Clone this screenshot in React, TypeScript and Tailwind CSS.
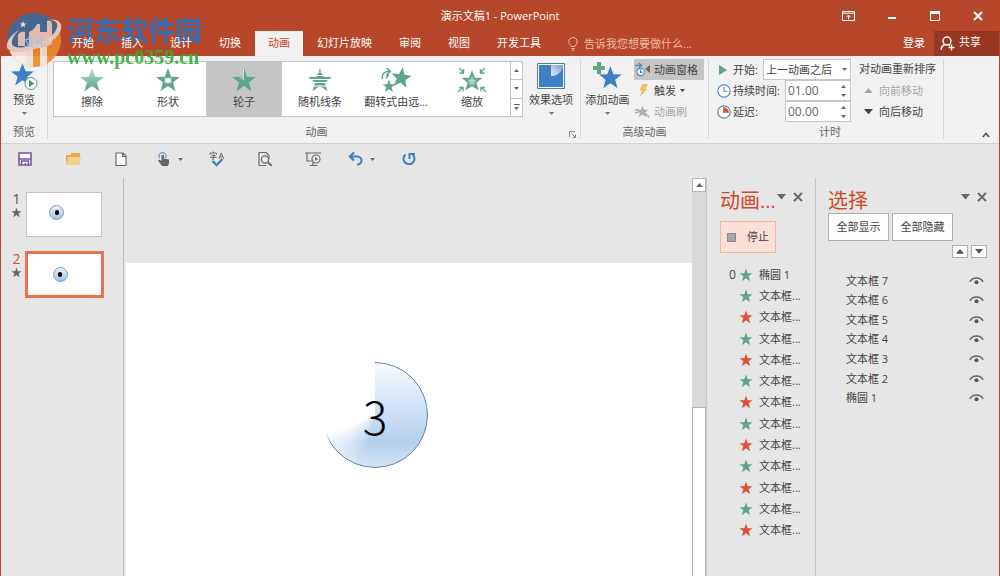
import { useState } from 'react';
import type { ReactNode } from 'react';

const STAR = '12,1 14.9,9 23,9.2 16.6,14.3 19,22.5 12,17.6 5,22.5 7.4,14.3 1,9.2 9.1,9';
const GREEN = '#5fa58b';
const BLUE = '#3f7fc4';

const tabs = ['文件', '开始', '插入', '设计', '切换', '动画', '幻灯片放映', '审阅', '视图', '开发工具'];
const shapes = ['文本框 7', '文本框 6', '文本框 5', '文本框 4', '文本框 3', '文本框 2', '椭圆 1'];
const effects = ['椭圆 1', ...Array.from({ length: 12 }, () => '文本框...')];

function Star({ color, className }: { color: string; className: string }) {
  return (
    <svg viewBox="0 0 24 24" className={className} aria-hidden="true">
      <polygon points={STAR} fill={color} />
    </svg>
  );
}

function Caret({ up = false, className = 'w-[5px]' }: { up?: boolean; className?: string }) {
  return (
    <svg viewBox="0 0 10 6" className={`${className} shrink-0`} aria-hidden="true">
      <path d={up ? 'M0 6 5 0l5 6z' : 'M0 0h10L5 6z'} fill="currentColor" />
    </svg>
  );
}

function Clock({ red = false }: { red?: boolean }) {
  return (
    <svg viewBox="0 0 14 14" className="w-[14px] shrink-0" aria-hidden="true">
      <circle cx="7" cy="7" r="6.2" fill="#fff" stroke="#5b88b8" strokeWidth="1.2" />
      {red ? (
        <path d="M6.500 7.500V2.500a5 5 0 0 1 5 5z" fill="#e0573a" stroke="#b04a30" strokeWidth=".6" />
      ) : (
        <path d="M7 3v4.3h3.5" fill="none" stroke="#5b88b8" strokeWidth="1.1" />
      )}
    </svg>
  );
}

function Group({ label, className = '', children }: { label?: string; className?: string; children?: ReactNode }) {
  return (
    <section className={`relative flex shrink-0 flex-col justify-between ${className}`}>
      <div className="flex pt-[3px]">{children}</div>
      <h2 className="pb-[3px] text-center leading-4 text-[#666]">{label}</h2>
    </section>
  );
}

function Divider() {
  return <div className="my-1 w-px shrink-0 bg-[#d5d5d5]" />;
}

function Logo() {
  return (
    <svg viewBox="0 0 56 56" className="mt-3 size-14" aria-hidden="true">
      <defs>
        <clipPath id="disc"><circle cx="28" cy="28" r="27" /></clipPath>
      </defs>
      <g clipPath="url(#disc)">
        <path d="M0 0h56v22L34 36 0 40z" fill="#3a6c9c" />
        <path d="M56 14v42H0V41c18 0 46-6 53-20z" fill="#ee8a2a" />
        <path d="M2 39h18v17H2z" fill="#f6ede6" />
        <path d="M20 36h7v20h-7zM34 32h7v24h-7z" fill="#f3e3da" />
      </g>
      <path d="M12 23c1-3 4-4 7-3v14h-7z" fill="#e6c6bd" />
      <path d="M23 20c4-2 6-4 8-8h3v24H23z" fill="#e6c6bd" />
      <path d="M34 20h7V9c4-1 5 0 5 4v19l-5 3h-7z" fill="#e6c6bd" />
      <path
        d="M13 18C6 22 0 29 1 35c1 7 17 6 31 1 14-5 25-14 23-23-1-5-6-6-12-5 7 0 9 3 8 7-1 7-11 14-21 17-11 4-23 5-24 0-1-4 2-9 7-14z"
        fill="#ead3cc"
      />
      <path d="m17 9 1 2.500h2.500l-2 1.500.8 2.500-2.300-1.500-2.300 1.500.8-2.500-2-1.500H16z" fill="#e9edf2" />
    </svg>
  );
}

function Watermark() {
  return (
    <div className="pointer-events-none absolute left-[5px] top-0 z-10 flex gap-[5px] opacity-90">
      <Logo />
      <div className="pt-[14px]">
        <p className="font-['Noto_Sans_CJK_SC',sans-serif] text-[27px] font-bold leading-8 text-[#2673c4]">河东软件园</p>
        <p className="font-['Liberation_Serif',serif] text-[20px] font-bold leading-[22px] text-[#35ad3b]">www.pc0359.cn</p>
      </div>
    </div>
  );
}

function TitleBar() {
  return (
    <header className="grid h-[31px] grid-cols-[1fr_auto_1fr] items-center">
      <span />
      <h1>演示文稿1 - PowerPoint</h1>
      <div className="flex justify-end">
        <button aria-label="功能区显示选项" className="flex w-[43px] justify-center">
          <svg viewBox="0 0 13 10" className="w-[13px]" fill="none" stroke="currentColor">
            <path d="M.5.5h12v9H.5zM.5 2.2h12M6.5 8.5v-4M4.5 6l2-2 2 2" />
          </svg>
        </button>
        <button aria-label="最小化" className="flex w-[43px] justify-center">
          <svg viewBox="0 0 10 10" className="w-[10px]"><path d="M1 6h8v2H1z" fill="currentColor" /></svg>
        </button>
        <button aria-label="最大化" className="flex w-[43px] justify-center">
          <svg viewBox="0 0 10 10" className="w-[10px]"><path d="M.5.5h9v9h-9z" fill="none" stroke="currentColor" /><path d="M0 0h10v3H0z" fill="currentColor" /></svg>
        </button>
        <button aria-label="关闭" className="flex w-[43px] justify-center">
          <svg viewBox="0 0 10 10" className="w-[10px]"><path d="m1 1 8 8M9 1 1 9" stroke="currentColor" strokeWidth="2" /></svg>
        </button>
      </div>
    </header>
  );
}

function TabBar({ active, onSelect }: { active: string; onSelect: (tab: string) => void }) {
  return (
    <nav className="relative z-20 flex h-[25px] items-stretch pl-[9px]">
      <div className="flex gap-px">
        {tabs.map((tab) => (
          <button
            key={tab}
            onClick={() => onSelect(tab)}
            className={`px-[13px] pb-[2px] ${tab === active ? 'bg-[#f1f1f1] text-[#c8452a]' : ''} ${tab === '文件' ? 'text-[#9cc8ee]' : ''}`}
          >
            {tab}
          </button>
        ))}
      </div>
      <label className="flex flex-1 items-center gap-[6px] pl-[14px] text-[#f0b9a9]">
        <svg viewBox="0 0 10 14" className="w-[10px] shrink-0" fill="none" stroke="currentColor" aria-hidden="true">
          <path d="M3 9.5C3 8 .8 7.300.8 4.700a4.200 4.200 0 0 1 8.400 0C9.200 7.300 7 8 7 9.500zM3.200 11.500h3.600M3.700 13.300h2.600" />
        </svg>
        <input
          aria-label="操作说明搜索"
          placeholder="告诉我您想要做什么..."
          className="w-full bg-transparent outline-none placeholder:text-[#f0b9a9]"
        />
      </label>
      <button className="px-[9px] pb-[2px]">登录</button>
      <button className="flex items-center gap-1 bg-[#963821] pl-[6px] pr-[18px]">
        <svg viewBox="0 0 15 15" className="w-[15px]" fill="none" stroke="currentColor" strokeWidth="1.4" aria-hidden="true">
          <circle cx="7" cy="5" r="4" />
          <path d="M1 14c.3-3 2-5 4.500-5.500M8.500 8.800l1.500.7M11.500 8.500v6M8.500 11.500h6" />
        </svg>
        <span className="pb-[3px]">共享</span>
      </button>
    </nav>
  );
}

function GalleryIcon({ name }: { name: string }) {
  return (
    <svg viewBox="0 0 30 26" className="h-[26px] w-[30px]" aria-hidden="true">
      <defs>
        <linearGradient id="wipe" x1="0" y1="0" x2="0" y2="1">
          <stop offset="0" stopColor="#b8dccd" />
          <stop offset="1" stopColor="#5a9f86" />
        </linearGradient>
        <linearGradient id="wheel" x1="1" y1="0" x2="0" y2="1">
          <stop offset="0" stopColor="#eef7f3" />
          <stop offset="1" stopColor={GREEN} />
        </linearGradient>
      </defs>
      {name === '翻转式由远...' ? (
        <g fill={GREEN}>
          <polygon points={STAR} transform="translate(9 -1) rotate(8 12 12) scale(.94)" />
          <polygon points={STAR} transform="translate(1 12) scale(.58)" />
          <path d="M1.500 12C.5 6.500 4 4 8.500 4.500M5.500 1l4 3.500-4 3.500M5.500 11.500c0-2 1-3 2.500-3.500" fill="none" stroke={GREEN} strokeWidth="1.500" />
        </g>
      ) : name === '缩放' ? (
        <g>
          <polygon points={STAR} transform="translate(3.500 2) scale(.96)" fill={GREEN} />
          <polygon points={STAR} transform="translate(9.500 8.500) scale(.46)" fill="#b3d6c8" />
          <path d="m2 1 4.500 4.500M6.500 2v4h-4M28 1l-4.500 4.500M23.500 2v4h4M1 25l4.500-4.500M2 20.500h4v4M29 25l-4.500-4.500M28 20.500h-4v4" fill="none" stroke={GREEN} strokeWidth="1.400" />
        </g>
      ) : (
        <g>
          <polygon points={STAR} transform="translate(2 0) scale(1.080)" fill={name === '擦除' ? 'url(#wipe)' : GREEN} />
          {name === '形状' && <rect x="12" y="11" width="6" height="5" fill="#fff" stroke="#9ccab8" />}
          {name === '轮子' && <path d="M15 1v13L9 9.700h2.800z" fill="url(#wheel)" />}
          {name === '随机线条' && <path d="M2 5h26M2 8.500h26M2 12.500h26M2 15.500h26M2 19h26" stroke="#fff" strokeWidth="1.200" />}
        </g>
      )}
    </svg>
  );
}

function Gallery() {
  const [selected, setSelected] = useState('轮子');
  return (
    <div className="mt-[2px] flex h-[56px] border border-[#c3c3c3] bg-white">
      {['擦除', '形状', '轮子', '随机线条', '翻转式由远...', '缩放'].map((name) => (
        <button
          key={name}
          onClick={() => setSelected(name)}
          className={`flex w-[76px] flex-col items-center pt-[5px] ${selected === name ? 'bg-[#c5c5c5]' : ''}`}
        >
          <GalleryIcon name={name} />
          <span className="pt-px leading-4">{name}</span>
        </button>
      ))}
      <div className="flex w-3 flex-col divide-y divide-[#c3c3c3] border-l border-[#c3c3c3] text-[#666]">
        <button aria-label="上一行" className="flex flex-1 items-center justify-center"><Caret up /></button>
        <button aria-label="下一行" className="flex flex-1 items-center justify-center"><Caret /></button>
        <button aria-label="其他" className="flex flex-1 flex-col items-center justify-center gap-[2px]">
          <span className="h-px w-[6px] bg-[#666]" />
          <Caret />
        </button>
      </div>
    </div>
  );
}

function BigButton({ label, className, children }: { label: string; className: string; children: ReactNode }) {
  return (
    <button className={`flex flex-col items-center pt-[3px] text-[#777] ${className}`}>
      {children}
      <span className="whitespace-nowrap pt-[2px] leading-4 text-[#444]">{label}</span>
      <Caret className="mt-1 w-[5px]" />
    </button>
  );
}

function Spinner({ id, value, onChange }: { id: string; value: string; onChange: (v: string) => void }) {
  return (
    <div className="flex h-[21px] w-[66px] border border-[#c6c6c6] bg-white">
      <input
        id={id}
        value={value}
        onChange={(e) => onChange(e.target.value)}
        className="w-full min-w-0 pl-[2px] text-[12px] text-[#666] outline-none"
      />
      <div className="flex w-[14px] shrink-0 flex-col items-center justify-center gap-[6px] text-[#666]">
        <Caret up />
        <Caret />
      </div>
    </div>
  );
}

function Ribbon() {
  const [duration, setDuration] = useState('01.00');
  const [delay, setDelay] = useState('00.00');
  return (
    <div className="flex h-[88px] border-b border-[#d2d2d2] bg-[#f1f1f1] text-[#444]">
      <Group label="预览" className="w-[46px]">
        <BigButton label="预览" className="w-full">
          <svg viewBox="0 0 30 28" className="w-[30px]" aria-hidden="true">
            <polygon points={STAR} transform="translate(1 0) scale(1.040)" fill={BLUE} />
            <circle cx="22" cy="21.500" r="6" fill="#fff" stroke="#6b8f80" />
            <path d="m20 18 5.500 3.500L20 25z" fill="#3f9a74" />
          </svg>
        </BigButton>
      </Group>
      <Divider />
      <Group label="动画" className="w-[532px] pl-[5px]">
        <Gallery />
        <BigButton label="效果选项" className="w-[56px]">
          <svg viewBox="0 0 30 28" className="w-[30px]" aria-hidden="true">
            <defs>
              <linearGradient id="corner" x1="0" y1="1" x2="1" y2="0">
                <stop offset="0" stopColor="#e8f1fa" />
                <stop offset="1" stopColor="#6ea0d6" />
              </linearGradient>
            </defs>
            <path d="M1.500 1.500h27v25h-27z" fill="#fff" stroke="#55799f" />
            <path d="M3 3h24v22H3z" fill={BLUE} />
            <path d="M15 3h12c0 6-5 11-12 11z" fill="url(#corner)" />
          </svg>
        </BigButton>
        <button aria-label="动画设置" className="absolute bottom-[5px] right-1">
          <svg viewBox="0 0 8 8" className="w-[7px]" fill="none" stroke="#777" aria-hidden="true">
            <path d="M.5 7V.5H7M3 3l4 4M7.500 4v3.500H4" />
          </svg>
        </button>
      </Group>
      <Divider />
      <Group label="高级动画" className="w-[127px]">
        <BigButton label="添加动画" className="w-[53px]">
          <svg viewBox="0 0 30 28" className="w-[30px]" aria-hidden="true">
            <polygon points={STAR} transform="translate(5 3) scale(1.030)" fill={BLUE} />
            <path d="M4 0h4v4h4v4H8v4H4V8H0V4h4z" fill={GREEN} />
          </svg>
        </BigButton>
        <div className="flex flex-col">
          <button className="flex h-[21px] items-center gap-1 bg-[#c5c5c5] pl-px pr-[6px]">
            <svg viewBox="0 0 16 16" className="w-[15px] shrink-0" fill="none" aria-hidden="true">
              <circle cx="6" cy="10.500" r="4" fill="#fff" stroke="#4e83bb" strokeWidth="1.200" />
              <path d="M6 8v3h2M0 3.500h6M4 1l3 2.500L4 6" stroke="#4e83bb" strokeWidth="1.300" />
              <path d="M16 3v9l-5-4.500z" fill="#666" />
            </svg>
            动画窗格
          </button>
          <button className="flex h-[21px] items-center gap-1 pl-px">
            <svg viewBox="0 0 16 16" className="w-[15px] shrink-0" aria-hidden="true">
              <path d="M8 1h6l-3.500 5H13L5 15l2.500-7H5z" fill="#f2bf55" />
            </svg>
            触发
            <Caret />
          </button>
          <button disabled className="flex h-[21px] items-center gap-1 pl-px text-[#a6a6a6]">
            <svg viewBox="0 0 16 16" className="w-[15px] shrink-0" aria-hidden="true">
              <polygon points={STAR} transform="translate(1 1) scale(.58)" fill="#b0b0b0" />
              <path d="M0 6h4M0 9h4M10 9l5 5" stroke="#b0b0b0" strokeWidth="1.600" />
            </svg>
            动画刷
          </button>
        </div>
      </Group>
      <Divider />
      <Group label="计时" className="w-[234px] pl-2">
        <div className="flex w-[134px] flex-col">
          <div className="flex h-[21px] items-center justify-between">
            <label htmlFor="start" className="flex items-center gap-[6px] pl-[2px]">
              <svg viewBox="0 0 8 10" className="w-[8px]" aria-hidden="true"><path d="m0 0 8 5-8 5z" fill={GREEN} /></svg>
              开始:
            </label>
            <div className="relative">
              <select id="start" className="h-[21px] w-[88px] appearance-none border border-[#c6c6c6] bg-white pl-[2px] leading-4 outline-none">
                <option>上一动画之后</option>
                <option>单击时</option>
                <option>与上一动画同时</option>
              </select>
              <span className="pointer-events-none absolute right-1 top-[9px] flex text-[#666]"><Caret /></span>
            </div>
          </div>
          <div className="flex h-[21px] items-center justify-between">
            <label htmlFor="duration" className="flex items-center gap-[2px] whitespace-nowrap"><Clock />持续时间:</label>
            <Spinner id="duration" value={duration} onChange={setDuration} />
          </div>
          <div className="flex h-[21px] items-center justify-between">
            <label htmlFor="delay" className="flex items-center gap-[2px]"><Clock red />延迟:</label>
            <Spinner id="delay" value={delay} onChange={setDelay} />
          </div>
        </div>
        <div className="flex flex-col pl-2">
          <span className="h-[21px] leading-[20px]">对动画重新排序</span>
          <button disabled className="flex h-[21px] items-center gap-[6px] pl-[5px] text-[#a6a6a6]">
            <Caret up className="w-[9px]" />向前移动
          </button>
          <button className="flex h-[21px] items-center gap-[6px] pl-[5px]">
            <Caret className="w-[9px]" />向后移动
          </button>
        </div>
      </Group>
      <Divider />
      <div className="flex flex-1 items-end justify-end pb-[5px] pr-[9px]">
        <button aria-label="折叠功能区">
          <svg viewBox="0 0 8 6" className="w-[8px]"><path d="m.8 5 3.200-3.500L7.200 5" fill="none" stroke="#555" strokeWidth="1.600" /></svg>
        </button>
      </div>
    </div>
  );
}

function ToolButton({ label, menu = false, children }: { label: string; menu?: boolean; children: ReactNode }) {
  return (
    <button aria-label={label} className="flex w-12 items-center justify-center gap-[6px] text-[#666]">
      <svg viewBox="0 0 16 16" className="w-4 shrink-0" fill="none" stroke="#6a6a6a" strokeWidth="1.200">
        {children}
      </svg>
      {menu && <Caret />}
    </button>
  );
}

function QuickAccess() {
  return (
    <div className="flex h-[34px] items-start pt-[7px]">
      <ToolButton label="保存">
        <path d="M2 2h12v12H2z" fill="#fff" stroke="#7a4fa3" strokeWidth="1.500" />
        <path d="M2 8h12M4.500 14v-4h7v4M8.500 12v2" stroke="#7a4fa3" strokeWidth="1.500" />
      </ToolButton>
      <ToolButton label="打开">
        <path d="M1 4h5V2h9v11H1z" fill="#e3a84c" stroke="none" />
        <path d="M3 6h13l-2 8H1z" fill="#f6cf8b" stroke="none" />
      </ToolButton>
      <ToolButton label="新建">
        <path d="M3 2h7l3 3v9.500H3zM9.500 2v3.500H13" fill="#fff" />
      </ToolButton>
      <ToolButton label="触摸/鼠标模式" menu>
        <path d="M3.500 7a3.500 3.500 0 1 1 6 0" stroke="#74a4d6" strokeWidth="1.500" />
        <path d="M5.500 4v6L3 8.500 2 9.500 6 15h6l1-3V8.500l-5-1V4z" fill="#666" stroke="none" />
      </ToolButton>
      <ToolButton label="拼写检查">
        <path d="M1 3.500V2h6.500v1.500M4.200.5V2M2.300 4.300h4L4.300 5.800v2.500H3M.8 6.300h7M10 7.800l2.300-6 2.300 6M10.800 5.800h3" strokeWidth="1" />
        <path d="m3.500 10 4 4 6-6" stroke={BLUE} strokeWidth="2.300" />
      </ToolButton>
      <ToolButton label="打印预览">
        <path d="M2 14.500V1.500h7l3 3V8M2 14.500h7" />
        <circle cx="8" cy="8.500" r="3.600" fill="#eee" />
        <path d="m10.700 11.200 4 3.500" strokeWidth="2" />
      </ToolButton>
      <ToolButton label="从头开始">
        <path d="M0 2h16M2 2v8h5M4.500 14.500h8M8 11v3" />
        <circle cx="11" cy="8" r="4" fill="#eee" />
        <path d="m10 6 3 2-3 2z" fill="#666" stroke="none" />
      </ToolButton>
      <ToolButton label="撤消" menu>
        <path d="M6 1.500 2 5.500l4 4M2.500 5.500H9c6 0 6 8 0 8" stroke={BLUE} strokeWidth="2.200" />
      </ToolButton>
      <ToolButton label="恢复">
        <path d="M4.500 3.500a5.500 5.500 0 1 0 7 0M8.500 8V3H14" stroke={BLUE} strokeWidth="2" />
      </ToolButton>
    </div>
  );
}

function Slides() {
  const [current, setCurrent] = useState(2);
  return (
    <aside className="flex w-[123px] shrink-0 flex-col gap-[13px] border-r border-[#bdbdbd] pl-[10px] pt-[13px]">
      {[1, 2].map((n) => (
        <div key={n} className="flex items-start gap-[3px]">
          <div className={`flex w-[11px] flex-col items-center text-[14px] leading-4 ${n === current ? 'text-[#d9532f]' : 'text-[#555]'}`}>
            {n}
            <Star color="#666" className="w-[11px]" />
          </div>
          <button
            aria-label={`幻灯片 ${n}`}
            onClick={() => setCurrent(n)}
            className={`flex items-center justify-center bg-white ${n === current ? 'h-[47px] w-[79px] border-3 border-[#e8714f] pr-[9px]' : 'm-px h-[45px] w-[76px] border border-[#c6c6c6] pb-[5px] pr-[15px]'}`}
          >
            <span className="flex size-[15px] items-center justify-center rounded-full border border-[#7f9dbd] bg-linear-to-b from-[#e8f1fa] to-[#9fc4e8]">
              <span className="h-[5px] w-1 rounded-full bg-black" />
            </span>
          </button>
        </div>
      ))}
    </aside>
  );
}

function Stage() {
  return (
    <main className="flex min-w-0 flex-1 flex-col pl-[2px] pt-[85px]">
      <div className="relative flex-1 bg-white">
        <div className="absolute left-[196px] top-[99px] flex size-[106px] items-center justify-center">
          <div className="absolute inset-0 rounded-full bg-linear-to-b from-[#f3f8fd] from-5% via-[#b3d0ed] via-75% to-[#d3e4f5] [mask-image:conic-gradient(#000_195deg,transparent_250deg)]" />
          <div className="absolute inset-0 rounded-full border border-[#5f7f9f] [mask-image:conic-gradient(#000_235deg,transparent_250deg)]" />
          <span className="relative font-['Noto_Sans_CJK_SC',sans-serif] text-[46px] font-light leading-none text-black">3</span>
        </div>
      </div>
    </main>
  );
}

function ScrollBar() {
  return (
    <div className="flex w-[15px] shrink-0 flex-col border-r border-[#c8c8c8] bg-[#dadada] text-[#666]">
      <button aria-label="向上滚动" className="flex h-[14px] items-center justify-center border border-[#b5b5b5] bg-white">
        <Caret up className="w-[7px]" />
      </button>
      <div className="h-[215px]" />
      <div className="flex-1 border border-b-0 border-[#b5b5b5] bg-white" />
    </div>
  );
}

function PaneHeader({ title }: { title: string }) {
  return (
    <div className="flex h-[30px] items-center text-[#666]">
      <h2 className="flex-1 whitespace-nowrap text-[20px] leading-7 text-[#d24726]">{title}</h2>
      <button aria-label="任务窗格选项" className="mb-2"><Caret className="w-[9px]" /></button>
      <button aria-label="关闭窗格" className="mb-2 ml-[7px]">
        <svg viewBox="0 0 10 10" className="w-[10px]"><path d="m1 1 8 8M9 1 1 9" stroke="currentColor" strokeWidth="1.800" /></svg>
      </button>
    </div>
  );
}

function AnimationPane() {
  return (
    <aside className="w-[109px] shrink-0 border-r border-[#c6c6c6] pl-[13px] pt-[8px]">
      <div className="pr-[12px]"><PaneHeader title="动画..." /></div>
      <button className="mt-[5px] flex h-[32px] w-[56px] items-center gap-[11px] border border-[#f5b8a5] bg-[#fce0d8] pl-[6px] text-[#444]">
        <span className="size-[9px] border border-[#8a8a8a] bg-[#a8a8a8]" />
        停止
      </button>
      <ol className="mt-[11px] grid h-[277px] auto-rows-fr pl-[9px]">
        {effects.map((name, i) => (
          <li key={i} className="flex items-center">
            <span className="w-[10px] text-[12px]">{i === 0 ? '0' : ''}</span>
            <Star color={i > 0 && i % 2 === 0 ? '#df5130' : GREEN} className="w-[14px]" />
            <span className="whitespace-nowrap pl-[6px]">{name}</span>
          </li>
        ))}
      </ol>
    </aside>
  );
}

function SelectionPane() {
  const [hidden, setHidden] = useState<string[]>([]);
  const toggle = (name: string) =>
    setHidden(hidden.includes(name) ? hidden.filter((n) => n !== name) : [...hidden, name]);

  return (
    <aside className="w-[183px] shrink-0 pl-3 pr-[12px] pt-[8px]">
      <PaneHeader title="选择" />
      <div className="-mt-[3px] flex gap-[3px]">
        <button onClick={() => setHidden([])} className="h-[28px] w-[61px] border border-[#b0b0b0] bg-[#fdfdfd]">全部显示</button>
        <button onClick={() => setHidden(shapes)} className="h-[28px] w-[61px] border border-[#b0b0b0] bg-[#fdfdfd]">全部隐藏</button>
      </div>
      <div className="mt-1 flex justify-end gap-[3px] text-[#555]">
        <button aria-label="上移一层" className="flex h-[13px] w-4 items-center justify-center border border-[#b0b0b0] bg-white"><Caret up className="w-[8px]" /></button>
        <button aria-label="下移一层" className="flex h-[13px] w-4 items-center justify-center border border-[#b0b0b0] bg-white"><Caret className="w-[8px]" /></button>
      </div>
      <ul className="mt-[13px] grid h-[137px] auto-rows-fr pl-[18px] pr-[3px]">
        {shapes.map((name) => (
          <li key={name} className="flex items-center justify-between">
            {name}
            <button aria-label={`显示或隐藏 ${name}`} onClick={() => toggle(name)} className={hidden.includes(name) ? 'opacity-20' : ''}>
              <svg viewBox="0 0 15 8" className="w-[15px]" aria-hidden="true">
                <path d="M.8 4.800C4-.2 11-.2 14.200 4.800" fill="none" stroke="#666" strokeWidth="1.500" />
                <circle cx="7.500" cy="5.300" r="2" fill="#555" />
              </svg>
            </button>
          </li>
        ))}
      </ul>
    </aside>
  );
}

export default function App() {
  const [tab, setTab] = useState('动画');

  return (
    <div className="relative flex min-h-screen flex-col border-x border-[#b7472a] bg-[#e6e6e6] font-['Open_Sans','Noto_Sans_CJK_SC',sans-serif] text-[11px] leading-4 text-[#444]">
      <div className="bg-[#b7472a] text-white">
        <TitleBar />
        <TabBar active={tab} onSelect={setTab} />
      </div>
      <Watermark />
      <Ribbon />
      <QuickAccess />
      <div className="flex flex-1">
        <Slides />
        <Stage />
        <ScrollBar />
        <AnimationPane />
        <SelectionPane />
      </div>
    </div>
  );
}
